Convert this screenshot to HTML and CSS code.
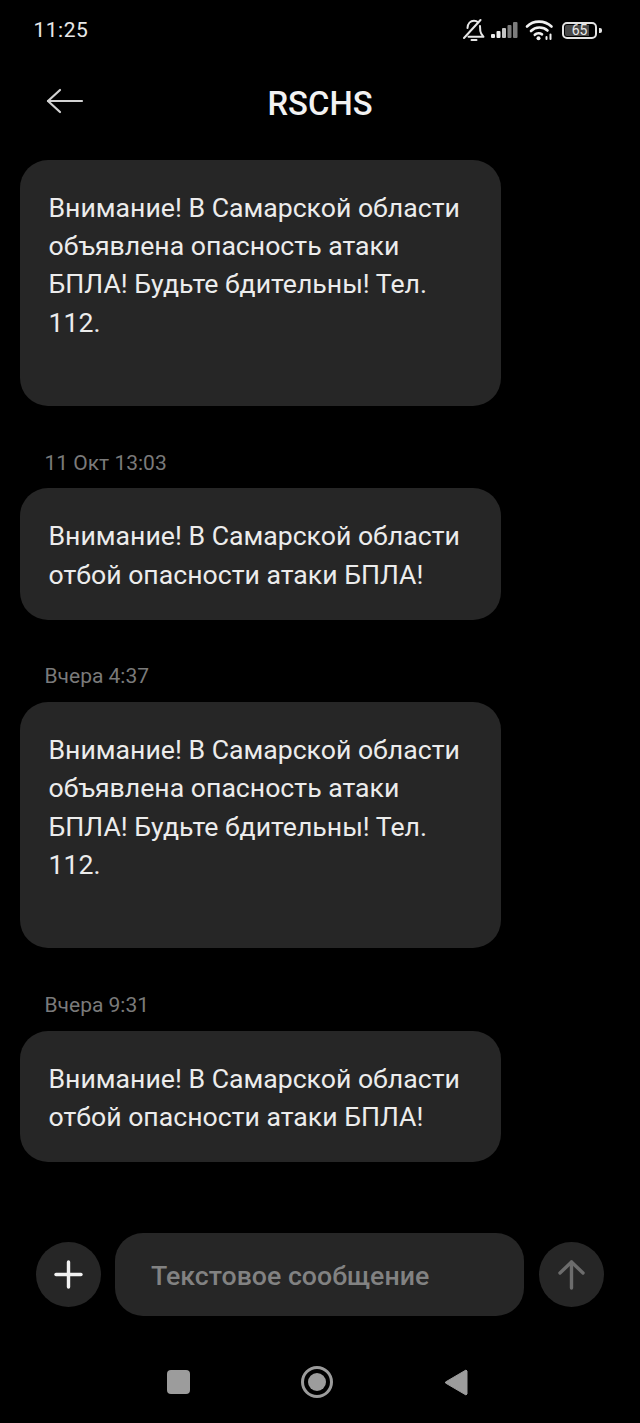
FILE: index.html
```html
<!DOCTYPE html>
<html lang="ru">
<head>
    <meta charset="UTF-8">
    <meta name="viewport" content="width=device-width, initial-scale=1.0">
    <title>RSCHS</title>
    <link rel="stylesheet" href="styles.css">
</head>
<body>
    <div class="screen">
        <div class="status-bar">
            <span class="clock">11:25</span>
            <div class="status-icons">
                <svg class="icon-bell" width="22" height="24" viewBox="0 0 22 24" fill="none" stroke="#e6e6e6" stroke-width="2" stroke-linecap="round" stroke-linejoin="round">
                    <path d="M17.5 2 L1 20"/>
                    <path d="M4.5 10 C4.8 5.5 7.5 2.8 11 2.8 C12.5 2.8 14 3.3 15 4.2"/>
                    <path d="M17 8 L17.3 13 C17.6 15.5 19 17 20.5 18.8 L5.5 18.8"/>
                    <path d="M8.5 22 L13.5 22"/>
                </svg>
                <svg class="icon-signal" width="27" height="18" viewBox="0 0 27 18">
                    <rect x="0" y="13" width="4" height="4" rx="1" fill="#ececec"/>
                    <rect x="5.5" y="10" width="4" height="7" rx="1" fill="#ececec"/>
                    <rect x="11" y="7" width="4" height="10" rx="1" fill="#c4c4c4"/>
                    <rect x="16.5" y="4" width="4" height="13" rx="1" fill="#7c7c7c"/>
                    <rect x="22" y="1" width="4.5" height="16" rx="1" fill="#7c7c7c"/>
                </svg>
                <svg class="icon-wifi" width="29" height="22" viewBox="0 0 29 22" fill="none" stroke="#f0f0f0" stroke-width="2.6" stroke-linecap="round">
                    <path d="M2 7.5 C8.5 1 19.5 1 26.5 7.5"/>
                    <path d="M6 12 C10.5 7.5 18 7.5 22.5 11.5"/>
                    <path d="M9.8 15.8 C11.8 14 15 14 17 15.3"/>
                    <circle cx="13.5" cy="19.3" r="2" fill="#f0f0f0" stroke="none"/>
                    <path d="M21.5 18 V20 M25.5 15.5 V20" stroke-width="2"/>
                </svg>
                <div class="battery">
                    <div class="battery-body"><span class="battery-level">65</span></div>
                    <div class="battery-cap"></div>
                </div>
            </div>
        </div>

        <div class="header">
            <svg class="back" width="38" height="26" viewBox="0 0 38 26" fill="none" stroke="#d2d2d2" stroke-width="2.2" stroke-linecap="round" stroke-linejoin="round">
                <path d="M36 13 H2"/>
                <path d="M14 2 L2 13 L14 24"/>
            </svg>
            <h1 class="title">RSCHS</h1>
        </div>

        <div class="messages">
            <div class="bubble">Внимание! В Самарской области объявлена опасность атаки БПЛА! Будьте бдительны! Тел. 112.<br>&nbsp;</div>

            <div class="time">11 Окт 13:03</div>
            <div class="bubble">Внимание! В Самарской области отбой опасности атаки БПЛА!</div>

            <div class="time">Вчера 4:37</div>
            <div class="bubble">Внимание! В Самарской области объявлена опасность атаки БПЛА! Будьте бдительны! Тел. 112.<br>&nbsp;</div>

            <div class="time">Вчера 9:31</div>
            <div class="bubble">Внимание! В Самарской области отбой опасности атаки БПЛА!</div>
        </div>

        <div class="composer">
            <div class="round-btn">
                <svg width="30" height="30" viewBox="0 0 30 30" fill="none" stroke="#f2f2f2" stroke-width="3.4" stroke-linecap="round">
                    <path d="M14.5 3 V28"/>
                    <path d="M2 15.5 H27"/>
                </svg>
            </div>
            <div class="input">Текстовое сообщение</div>
            <div class="round-btn send">
                <svg width="30" height="32" viewBox="0 0 30 32" fill="none" stroke="#6c6c6c" stroke-width="3.4" stroke-linecap="round" stroke-linejoin="round">
                    <path d="M14.5 4 V30"/>
                    <path d="M3 15 L14.5 4 L26 15"/>
                </svg>
            </div>
        </div>

        <div class="nav-bar">
            <div class="nav-square"></div>
            <div class="nav-home"><div class="nav-home-dot"></div></div>
            <svg class="nav-back" width="24" height="28" viewBox="0 0 24 28">
                <path d="M22 2 L23 3 V26 L22 27 L1.5 15 V14 Z" fill="#9c9c9c" stroke="#9c9c9c" stroke-linejoin="round"/>
            </svg>
        </div>
    </div>
</body>
</html>
```

FILE: styles.css
```css
html, body {
    margin: 0;
    padding: 0;
    background-color: #000;
}
.screen {
    width: 640px;
    height: 1423px;
    overflow: hidden;
    background-color: #000;
    color: #f0f0f0;
    font-family: Roboto, "Noto Sans", sans-serif;
}
.status-bar {
    height: 60px;
    padding: 0 38px 0 33.5px;
    display: flex;
    align-items: center;
    justify-content: space-between;
    box-sizing: border-box;
}
.clock {
    font-size: 21px;
    letter-spacing: 0.5px;
    color: #e8e8e8;
}
.status-icons {
    display: flex;
    align-items: center;
}
.icon-signal {
    margin-left: 6px;
}
.icon-wifi {
    margin-left: 7px;
}
.battery {
    display: flex;
    align-items: center;
    margin-left: 8px;
}
.battery-body {
    width: 35px;
    height: 17px;
    box-sizing: border-box;
    border: 2px solid #e4e4e4;
    border-radius: 5px;
    padding: 1px;
    display: flex;
}
.battery-level {
    flex: 1;
    background: linear-gradient(90deg, #484848 82%, transparent 82%);
    border-radius: 2px;
    font-size: 14px;
    line-height: 11px;
    text-align: center;
    color: #e8e8e8;
}
.battery-cap {
    width: 3px;
    height: 5px;
    margin-left: 2px;
    background-color: #e4e4e4;
    border-radius: 0 2px 2px 0;
}
.header {
    height: 100px;
    padding: 0 46px 13px;
    box-sizing: border-box;
    display: grid;
    grid-template-columns: 1fr auto 1fr;
    align-items: center;
}
.back {
    margin-bottom: 5px;
}
.title {
    margin: 0;
    font-size: 32.8px;
    font-weight: 500;
    color: #f2f2f2;
}
.messages {
    padding: 0 20px;
}
.bubble {
    width: 481px;
    box-sizing: border-box;
    padding: 29px 26px 26.2px 28.5px;
    background-color: #262626;
    border-radius: 28px;
    font-size: 26.65px;
    line-height: 38.2px;
    color: #ececec;
}
.time {
    margin: 44.3px 0 13.95px 24.5px;
    font-size: 21px;
    line-height: 24px;
    color: #7a7a7a;
}
.composer {
    margin-top: 70.6px;
    padding: 0 36px;
    display: flex;
    align-items: center;
    gap: 14px;
}
.round-btn {
    width: 65px;
    height: 65px;
    flex: none;
    border-radius: 50%;
    background-color: #262626;
    display: flex;
    align-items: center;
    justify-content: center;
}
.send {
    margin-left: 1px;
}
.input {
    flex: 1;
    height: 83px;
    padding-left: 36px;
    border-radius: 28px;
    background-color: #262626;
    font-size: 26.7px;
    font-weight: 500;
    line-height: 86px;
    color: #828282;
}
.nav-bar {
    margin-top: 50px;
    padding: 0 172px 0 166.5px;
    display: flex;
    align-items: center;
    justify-content: space-between;
}
.nav-square {
    width: 23px;
    height: 24px;
    border-radius: 4px;
    background-color: #9c9c9c;
}
.nav-home {
    width: 32px;
    height: 32px;
    box-sizing: border-box;
    border: 3px solid #9c9c9c;
    border-radius: 50%;
    display: flex;
    align-items: center;
    justify-content: center;
}
.nav-home-dot {
    width: 18px;
    height: 18px;
    border-radius: 50%;
    background-color: #9c9c9c;
}
```
